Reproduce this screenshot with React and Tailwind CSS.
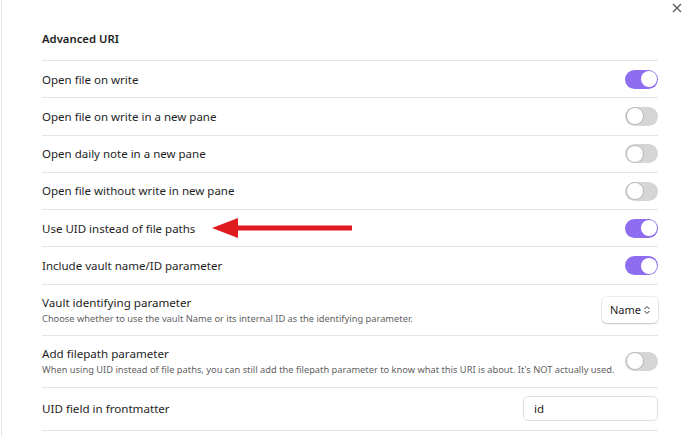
import React, { useState } from 'react'

const Toggle = ({ on }) => (
    <div className={"w-[33px] h-[19px] rounded-full flex items-center px-[1.5px] shrink-0 " + (on ? "bg-[#8e6df0] justify-end" : "bg-[#d5d5d5] justify-start")}>
        <div className={"w-[16px] h-[16px] rounded-full bg-white " + (on ? "" : "shadow-[0_0_0_1px_#b8b8b8]")} />
    </div>
)

const rows = [
    { name: "Open file on write", on: true },
    { name: "Open file on write in a new pane", on: false },
    { name: "Open daily note in a new pane", on: false },
    { name: "Open file without write in new pane", on: false },
    { name: "Use UID instead of file paths", on: true, arrow: true },
    { name: "Include vault name/ID parameter", on: true },
]

export default function App() {
    const [uid, setUid] = useState("id")
    return (
        <div className="w-[690px] h-[436px] overflow-hidden bg-white text-[#1e1e1e] font-['Noto_Sans',sans-serif] relative">
            <div className="absolute right-[8px] top-[3px] leading-none">
                <svg width="10" height="10" viewBox="0 0 10 10"><path d="M1 1L9 9M9 1L1 9" stroke="#555" strokeWidth="1.2" /></svg>
            </div>
            <div className="ml-[1px] h-full border-l border-[#e2e2e2] pl-[40px] pr-[32px]">
                <div className="h-[60px] flex items-end pb-[12px] text-[11.3px] font-semibold">Advanced URI</div>
                {rows.map(r => (
                    <div key={r.name} className="border-t border-[#e6e6e6] py-[9px] flex items-center justify-between h-[37.3px] text-[11.5px]">
                        <div className="flex items-center">
                            <span>{r.name}</span>
                            {r.arrow ? (
                                <svg width="142" height="22" viewBox="0 0 142 22" className="ml-[17px]">
                                    <path d="M0 11L26 1V8.5H140V13.5H26V21Z" fill="#e01b1f" />
                                </svg>
                            ) : null}
                        </div>
                        <Toggle on={r.on} />
                    </div>
                ))}
                <div className="border-t border-[#e6e6e6] py-[9px] flex items-center justify-between h-[51px]">
                    <div>
                        <div className="text-[11.6px] leading-[17px]">Vault identifying parameter</div>
                        <div className="text-[9.3px] text-[#5f5f5f] leading-[15px] whitespace-nowrap">Choose whether to use the vault Name or its internal ID as the identifying parameter.</div>
                    </div>
                    <div className="w-[56px] h-[26px] rounded-[5px] bg-white shadow-[0_1px_2px_rgba(0,0,0,0.18),0_0_0_1px_rgba(0,0,0,0.06)] flex items-center justify-between pl-[8px] pr-[7px] text-[11px]">
                        <span>Name</span>
                        <svg width="8" height="10" viewBox="0 0 8 10"><path d="M1.5 4L4 1.5L6.5 4M1.5 6L4 8.5L6.5 6" stroke="#333" strokeWidth="1" fill="none" /></svg>
                    </div>
                </div>
                <div className="border-t border-[#e6e6e6] py-[9px] flex items-center justify-between h-[52px]">
                    <div>
                        <div className="text-[11.6px] leading-[17px]">Add filepath parameter</div>
                        <div className="text-[9.3px] text-[#5f5f5f] leading-[15px] whitespace-nowrap">When using UID instead of file paths, you can still add the filepath parameter to know what this URI is about. It's NOT actually used.</div>
                    </div>
                    <Toggle on={false} />
                </div>
                <div className="border-t border-b border-[#e6e6e6] py-[8px] flex items-center justify-between h-[44px]">
                    <div className="text-[11.6px]">UID field in frontmatter</div>
                    <input value={uid} onChange={e => setUid(e.target.value)} className="w-[135px] h-[25px] rounded-[5px] border border-[#e0e0e0] px-[10px] text-[11.5px] outline-none" />
                </div>
            </div>
        </div>
    )
}
